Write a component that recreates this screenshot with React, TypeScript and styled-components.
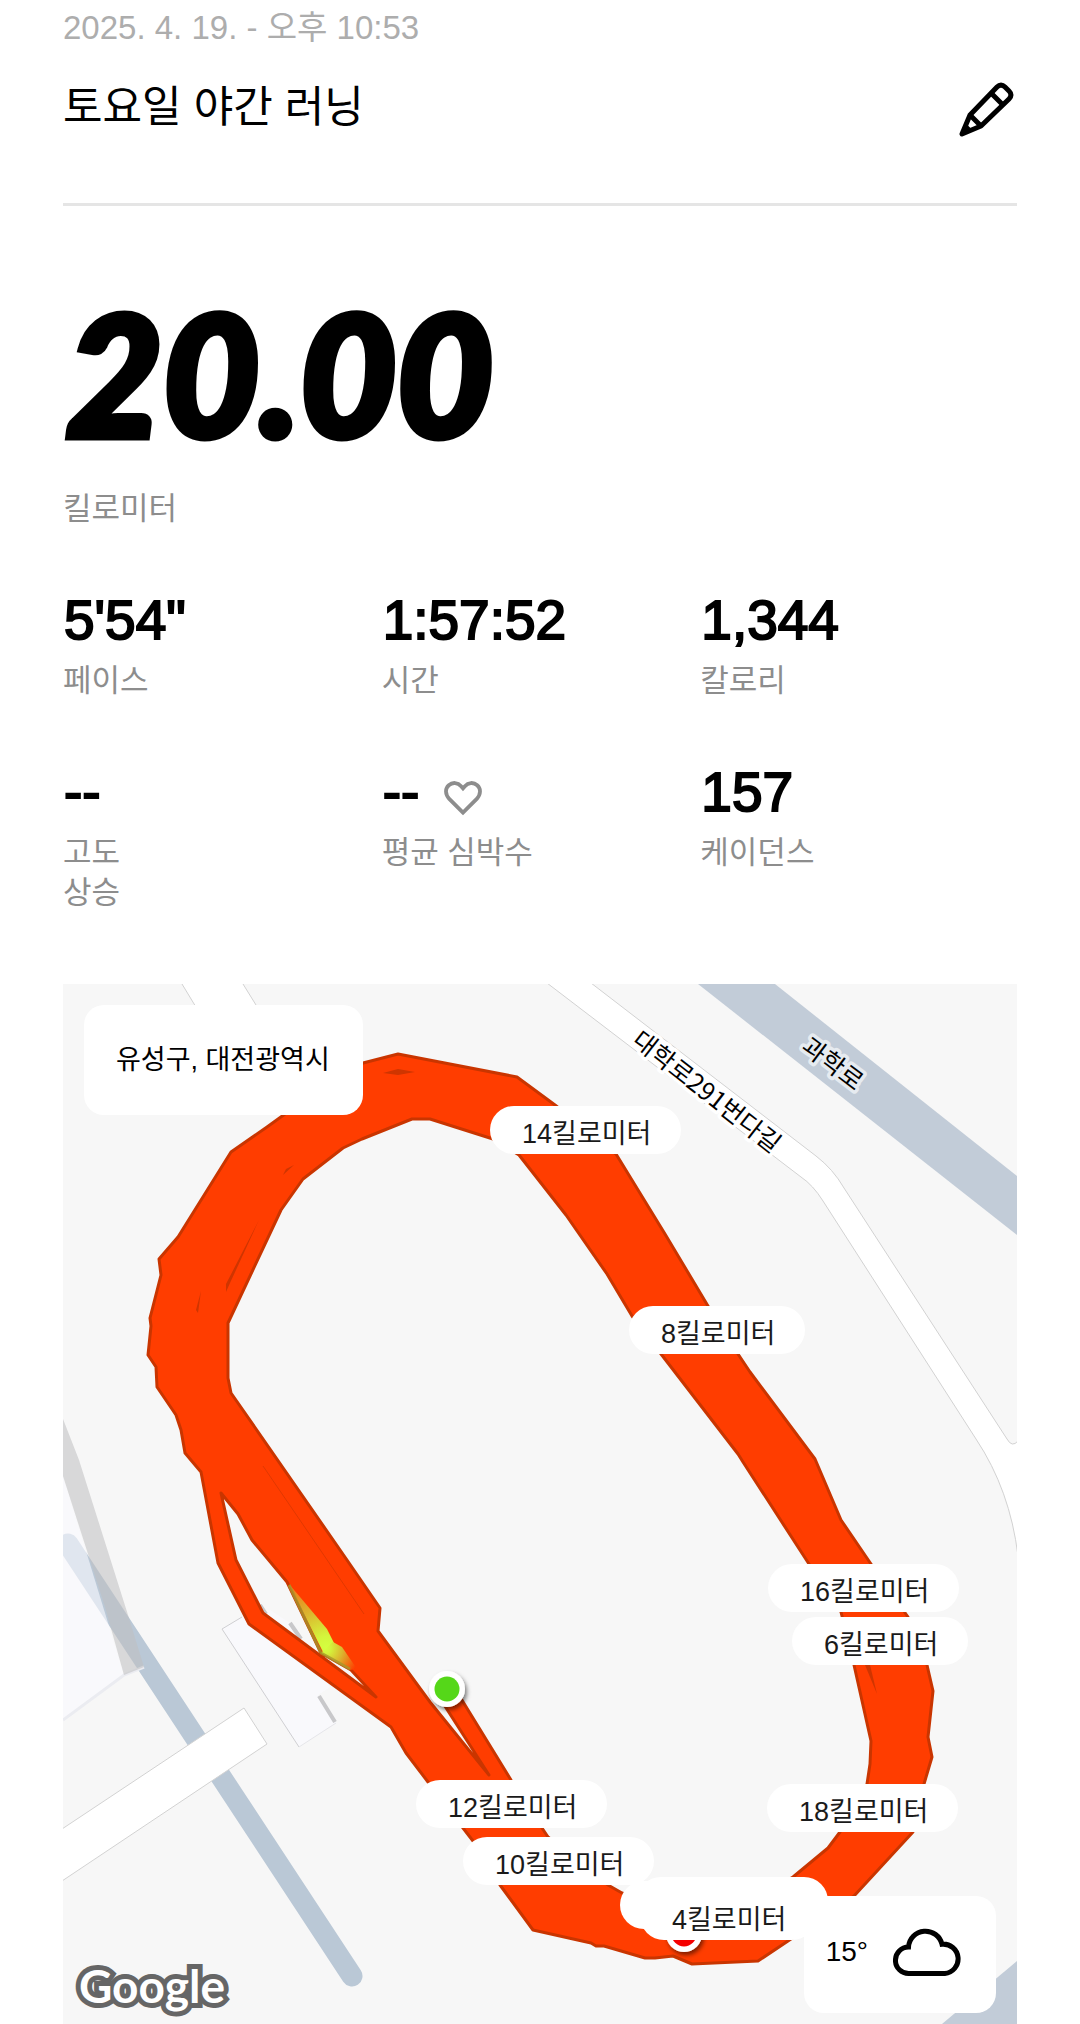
import React from "react";
import styled, { createGlobalStyle } from "styled-components";

const GlobalStyle = createGlobalStyle`
  * { box-sizing: border-box; }
  body {
    margin: 0;
    background: #fff;
    color: #000;
    font-family: "Liberation Sans", "Noto Sans CJK KR", sans-serif;
  }
`;

const Page = styled.main`
  padding: 8px 63px 0;
`;

const Header = styled.header`
  display: flex;
  flex-direction: column;
  gap: 29px;
  padding-bottom: 66px;
  border-bottom: 3px solid #e5e5e5;
`;

const DateText = styled.time`
  font-size: 33px;
  line-height: 40px;
  color: #adadad;
`;

const TitleRow = styled.div`
  display: flex;
  align-items: center;
  justify-content: space-between;
`;

const Title = styled.h1`
  margin: 0;
  font-size: 43px;
  line-height: 58px;
  font-weight: 400;
`;

const EditButton = styled.button`
  display: flex;
  align-items: flex-end;
  justify-content: flex-end;
  width: 60px;
  height: 60px;
  padding: 0 2px 0 0;
  border: 0;
  background: none;
  color: inherit;
`;

const Hero = styled.section`
  padding-top: 81px;
`;

const Distance = styled.p`
  margin: 0 0 30px;
  padding-left: 3px;
  font-family: Lato, sans-serif;
  font-size: 167px;
  line-height: 172px;
  font-weight: 900;
  font-style: italic;
  -webkit-text-stroke: 7px #000;
`;

const Label = styled.dt`
  margin: 0;
  font-size: 31px;
  line-height: 40px;
  color: #8d8d8d;
  white-space: pre-line;
`;

const Stats = styled.dl`
  display: grid;
  grid-template-columns: repeat(3, 1fr);
  gap: 61px 2px;
  margin: 61px 0 71px;
`;

const Stat = styled.div`
  display: flex;
  flex-direction: column-reverse;
  justify-content: flex-end;
  gap: 11px;
`;

const Value = styled.dd`
  display: flex;
  align-items: center;
  gap: 25px;
  margin: 0;
  padding-left: 1px;
  font-size: 55px;
  line-height: 60px;
  -webkit-text-stroke: 2px #000;
`;

const MapPanel = styled.section`
  position: relative;
  aspect-ratio: 954 / 1040;
  overflow: hidden;
  background: #f7f7f7;
`;

const MapDrawing = styled.svg`
  display: block;
  width: 100%;
  height: 100%;
`;

const Pill = styled.span<{ $x: number; $y: number; $w?: number }>`
  position: absolute;
  left: ${(p) => (p.$x / 954) * 100}%;
  top: ${(p) => (p.$y / 1040) * 100}%;
  width: ${(p) => (p.$w ? `${p.$w}px` : "auto")};
  height: 48px;
  padding: 3px 30px 0 32px;
  border-radius: 24px;
  background: #fff;
  color: #1a1a1a;
  font-size: 27px;
  line-height: 50px;
  white-space: nowrap;
`;

const PlaceCard = styled.div`
  position: absolute;
  top: 21px;
  left: 21px;
  padding: 35px 33px 35px 32px;
  border-radius: 20px;
  background: #fff;
  font-size: 27px;
  line-height: 40px;
`;

const WeatherCard = styled.div`
  position: absolute;
  right: 21px;
  bottom: 11px;
  display: flex;
  align-items: center;
  gap: 25px;
  height: 117px;
  padding: 0 34px 5px 22px;
  border-radius: 20px;
  background: #fff;
  font-size: 28px;
  line-height: 40px;
`;

const RoadName = styled.text<{ $halo: string }>`
  font-family: "Noto Sans CJK KR", sans-serif;
  font-size: 25px;
  text-anchor: middle;
  dominant-baseline: central;
  fill: #000;
  stroke: ${(p) => p.$halo};
  stroke-width: 7px;
  stroke-linejoin: round;
  paint-order: stroke;
`;

const MapBrand = styled.text`
  font-family: Lato, sans-serif;
  font-size: 46px;
  font-weight: 700;
  fill: #fff;
  stroke: #666;
  stroke-width: 10px;
  paint-order: stroke;
`;

const PencilIcon = () => (
  <svg width="56" height="56" viewBox="0 0 56 56" fill="none" stroke="currentColor" strokeWidth="5" strokeLinejoin="round" aria-hidden="true">
    <path d="M3 53 L11 34 L38 6 Q42 2 46 6 L50 10 Q54 14 50 18 L22 45 Z" />
    <path d="M32 12 L44 24 M11 34 L22 45" />
    <path d="M4 52 L7 44 L12 49 Z" fill="currentColor" strokeWidth="2" />
  </svg>
);

const Heart = styled.svg`
  margin-top: 12px;
`;

const HeartIcon = () => (
  <Heart width="38" height="36" viewBox="0 0 40 38" fill="none" stroke="#8d8d8d" strokeWidth="4" aria-hidden="true">
    <path d="M20 34.500 L5.500 20 C1 15 1 9 5 5.500 C9 2 14.500 2.500 18 6.500 L20 8.800 L22 6.500 C25.500 2.500 31 2 35 5.500 C39 9 39 15 34.500 20 Z" />
  </Heart>
);

const CloudIcon = () => (
  <svg width="69" height="48" viewBox="0 0 69 48" fill="none" stroke="#000" strokeWidth="5" aria-hidden="true">
    <path d="M15.800 45.500 A13.200 13.200 0 0 1 15.500 19.100 A17 17 0 0 1 49 16.200 A14.700 14.700 0 1 1 51.800 45.500 Z" />
  </svg>
);

const OUTER =
  "M398 1054 L517 1077 L555 1105 L616 1154 L665 1234 L708 1306 L738 1354 L750 1372 L815 1459 L841 1520 L871 1564 L908 1617 L927 1665 L933 1691 L928 1737 L932 1757 L924 1784 L913 1832 L854 1896 L788 1941 L758 1961 L692 1964 L673 1956 L655 1958 L645 1958 L604 1946 L596 1946 L591 1943 L533 1930 L500 1885 L473 1841 L463 1828 L428 1782 L406 1753 L391 1727 L249 1624 L218 1563 L201 1472 L185 1453 L181 1430 L176 1415 L157 1387 L156 1367 L148 1355 L151 1326 L150 1318 L161 1275 L159 1259 L178 1237 L231 1152 L267 1127 L285 1114 L363 1063 Z";
const INNER =
  "M412 1119 L430 1119 L493 1139 L519 1155 L566 1215 L607 1274 L632 1316 L661 1354 L738 1454 L743 1462 L809 1564 L841 1612 L854 1665 L871 1741 L870 1764 L867 1784 L840 1832 L828 1848 L793 1877 L710 1925 L622 1893 L608 1885 L548 1837 L542 1828 L511 1780 L457 1692 L441 1700 L489 1775 L430 1702 L378 1631 L380 1608 L347 1560 L231 1393 L228 1378 L228 1323 L281 1210 L303 1179 L343 1148 L362 1139 Z";
const GAP =
  "M221 1493 L238 1514 L252 1540 L287 1582 L321 1653 L351 1670 L376 1697 L263 1613 L236 1560 Z";

const KILOMETERS = [
  { km: 14, x: 427, y: 122 },
  { km: 8, x: 566, y: 322 },
  { km: 16, x: 705, y: 580 },
  { km: 6, x: 729, y: 633 },
  { km: 18, x: 704, y: 800 },
  { km: 12, x: 353, y: 796 },
  { km: 10, x: 400, y: 853 },
];

const STATS = [
  { value: "5'54\"", label: "페이스" },
  { value: "1:57:52", label: "시간" },
  { value: "1,344", label: "칼로리" },
  { value: "--", label: "고도\n상승" },
  { value: "--", label: "평균 심박수", heart: true },
  { value: "157", label: "케이던스" },
];

const PaceStops = ({ end }: { end: string }) => (
  <>
    <stop offset="0" stopColor="#d4ff40" />
    <stop offset="0.15" stopColor="#d4f53c" />
    <stop offset="0.5" stopColor="#dcb32e" />
    <stop offset="1" stopColor={end} />
  </>
);

const RouteMap = () => (
  <MapDrawing viewBox="63 984 954 1040" preserveAspectRatio="none">
    <defs>
      <radialGradient id="pace-in" gradientUnits="userSpaceOnUse" cx="327" cy="1648" r="80">
        <PaceStops end="#f26a14" />
      </radialGradient>
      <radialGradient id="pace-out" gradientUnits="userSpaceOnUse" cx="325" cy="1648" r="36">
        <PaceStops end="#ff3d00" />
      </radialGradient>
      <filter id="drop" x="-50%" y="-50%" width="200%" height="200%">
        <feDropShadow dx="2" dy="3" stdDeviation="2" floodOpacity="0.5" />
      </filter>
    </defs>

    <g stroke="#d2d2d2" strokeWidth="1">
      <path d="M182 984 L222 1050 L290 1060 L243 984" fill="#fff" />
      <path d="M547 983 L801 1177 Q813 1185 823 1201 L976 1439 Q1010 1490 1018 1556 L1018 1441 Q1012 1448 1007 1439 L844 1188 Q833 1169 816 1156 L591 983 Z" fill="#fff" />
    </g>
    <path d="M698 984 L775 984 L1017 1176 L1017 1235 Z" fill="#c2ccd8" />
    <path d="M1017 1961 L942 2024 L1017 2024 Z" fill="#c2ccd8" />

    <path d="M68 1544 L352 1976" stroke="#bac8d6" strokeWidth="21" strokeLinecap="round" />
    <path d="M63 1476 L124 1675 L63 1720 Z" fill="#fafaff" fillOpacity="0.6" />
    <path d="M144 1667 L124 1675 L63 1720" stroke="#ebecf1" strokeWidth="3" fill="none" />
    <path d="M63 1419 L79 1460 L128 1615 L144 1667 L124 1675 L105 1607 L63 1476 Z" fill="#bfbfc2" fillOpacity="0.57" />
    <path d="M244 1708 L267 1744 L62 1881 L62 1829 Z" fill="#fff" stroke="#d2d2d2" />
    <path d="M222 1629 L242 1617 L270 1610 L290 1623 L330 1687 L318 1695 L336 1723 L299 1747 Z" fill="#f9f9fc" />
    <path d="M242 1617 L222 1629 L299 1747" fill="none" stroke="#cfcfd2" />
    <path d="M299 1747 L336 1723" fill="none" stroke="#e6e6ea" />
    <path d="M290 1623 L301 1639 M319 1696 L335 1722 M260 1605 L266 1614" stroke="#c8c8ca" strokeWidth="4" />

    <path d={`${OUTER} ${INNER} ${GAP}`} fill="#ff3d00" fillRule="evenodd" stroke="#c93500" strokeWidth="3" strokeLinejoin="round" />
    <g fill="#cf3500">
      <path d="M383 1073 L398 1069 L415 1072 L398 1075 Z" />
      <path d="M283 1175 L286 1169 L294 1165 Z" />
      <path d="M259 1220 L226 1284 L226 1292 L230 1283 Z" />
      <path d="M201 1291 L196 1310 L198 1313 Z" />
      <path d="M865 1665 L870 1665 L877 1694 Z" />
    </g>
    <path d="M263 1466 L364 1614" stroke="#e03800" strokeWidth="1" />
    <path d="M289 1584 L327 1629 L334 1643 L324 1654 Z" fill="url(#pace-in)" />
    <path d="M333 1642 L342 1647 L357 1669 L350 1670 L321 1653 Z" fill="url(#pace-out)" />
    <path d="M289 1585 L321 1653 L350 1669" fill="none" stroke="#a8962a" strokeWidth="3" strokeOpacity="0.8" />

    <g filter="url(#drop)">
      <circle cx="447" cy="1689" r="18" fill="#fff" />
      <circle cx="684" cy="1934" r="18" fill="#fff" />
    </g>
    <circle cx="447" cy="1689" r="12.500" fill="#55d719" />
    <circle cx="684" cy="1934" r="12.500" fill="#f50000" />

    <RoadName $halo="#fff" transform="translate(708 1090) rotate(38)">대학로291번다길</RoadName>
    <RoadName $halo="#e6ebf0" transform="translate(834 1062) rotate(37)">과학로</RoadName>
    <MapBrand x="79" y="2003">Google</MapBrand>
  </MapDrawing>
);

export default function App() {
  return (
    <>
      <GlobalStyle />
      <Page>
        <Header>
          <DateText dateTime="2025-04-19T22:53">2025. 4. 19. - 오후 10:53</DateText>
          <TitleRow>
            <Title>토요일 야간 러닝</Title>
            <EditButton type="button" aria-label="편집">
              <PencilIcon />
            </EditButton>
          </TitleRow>
        </Header>

        <Hero>
          <Distance>20.00</Distance>
          <Label as="p">킬로미터</Label>
        </Hero>

        <Stats>
          {STATS.map((s) => (
            <Stat key={s.label}>
              <Label>{s.label}</Label>
              <Value>
                {s.value}
                {s.heart && <HeartIcon />}
              </Value>
            </Stat>
          ))}
        </Stats>

        <MapPanel>
          <RouteMap />
          {KILOMETERS.map((p) => (
            <Pill key={p.km} $x={p.x} $y={p.y}>
              {p.km}킬로미터
            </Pill>
          ))}
          <Pill $x={557} $y={897} $w={176} />
          <Pill $x={574} $y={893} $w={191} />
          <Pill $x={577} $y={908}>4킬로미터</Pill>
          <PlaceCard>유성구, 대전광역시</PlaceCard>
          <WeatherCard>
            15°
            <CloudIcon />
          </WeatherCard>
        </MapPanel>
      </Page>
    </>
  );
}
